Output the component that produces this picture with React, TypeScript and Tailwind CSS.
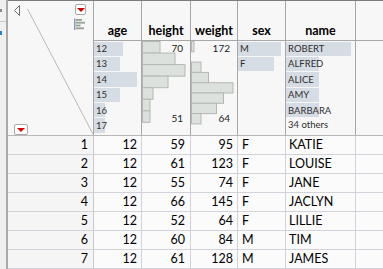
import React from "react";

const rows: [number, number, number, number, string, string][] = [
  [1, 12, 59, 95, "F", "KATIE"],
  [2, 12, 61, 123, "F", "LOUISE"],
  [3, 12, 55, 74, "F", "JANE"],
  [4, 12, 66, 145, "F", "JACLYN"],
  [5, 12, 52, 64, "F", "LILLIE"],
  [6, 12, 60, 84, "M", "TIM"],
  [7, 12, 61, 128, "M", "JAMES"],
];

const ageBars = [
  { label: "12", w: 29 },
  { label: "13", w: 26 },
  { label: "14", w: 43 },
  { label: "15", w: 26 },
  { label: "16", w: 11 },
  { label: "17", w: 11 },
];

const nameBars = [
  { label: "ROBERT", w: 65 },
  { label: "ALFRED", w: 33 },
  { label: "ALICE", w: 33 },
  { label: "AMY", w: 33 },
  { label: "BARBARA", w: 33 },
];

const heightBins = [17.5, 32.5, 42.5, 25.5, 10.5, 7.5, 7.5];
const weightBins = [2.5, 0, 9.5, 17, 41.5, 32, 25, 9.5];

function Histogram({ bins, binH }: { bins: number[]; binH: number }) {
  return (
    <svg width="48" height="94" className="absolute left-0 top-0">
      {bins.map((w, i) =>
        w > 0 ? (
          <rect
            key={i}
            x={0.5}
            y={0.5 + i * binH}
            width={w}
            height={binH}
            fill="#dde1dd"
            stroke="#b3b8b3"
            strokeWidth={1}
          />
        ) : null
      )}
    </svg>
  );
}

function RedButton({ className }: { className: string }) {
  return (
    <div
      className={`absolute bg-white border border-[#a9a9a9] rounded-[2px] flex items-center justify-center ${className}`}
    >
      <svg width="8" height="4" viewBox="0 0 8 4">
        <polygon points="0,0 8,0 4,4" fill="#d40000" />
      </svg>
    </div>
  );
}

function CornerCell() {
  return (
    <div className="relative w-[86px] shrink-0 border-r border-[#a8a8a8] bg-[#f7f7f7]">
      <svg width="85" height="134" className="absolute left-0 top-0">
        <line x1="19.5" y1="8" x2="85" y2="133" stroke="#b8b8b8" strokeWidth="1" />
        <polygon
          points="11.5,4.5 11.5,14.5 6.5,9.5"
          fill="none"
          stroke="#6f6f6f"
          strokeWidth="1"
        />
        <rect x="66" y="17.5" width="1.5" height="11.5" fill="#8797b8" />
        <rect x="68" y="18" width="6" height="1.8" fill="#93a293" />
        <rect x="68" y="20.8" width="9" height="1.8" fill="#93a293" />
        <rect x="68" y="23.6" width="4.5" height="1.8" fill="#93a293" />
        <rect x="68" y="26.4" width="8" height="1.8" fill="#93a293" />
      </svg>
      <RedButton className="left-[67px] top-[3px] w-[11px] h-[11px]" />
      <RedButton className="left-[6px] top-[123px] w-[14px] h-[11px]" />
    </div>
  );
}

function ColHead({
  name,
  w,
  children,
}: {
  name: string;
  w: string;
  children?: React.ReactNode;
}) {
  return (
    <div className={`${w} shrink-0 flex flex-col border-r border-[#a8a8a8]`}>
      <div className="h-[40px] border-b border-[#a8a8a8] flex items-end justify-center pb-[2px] text-[12.5px] font-bold text-black leading-[14px]">
        {name}
      </div>
      <div className="relative h-[94px]">{children}</div>
    </div>
  );
}

function BarList({ bars }: { bars: { label: string; w: number }[] }) {
  return (
    <div className="flex flex-col gap-[1px] pt-[0.5px]">
      {bars.map((b) => (
        <div
          key={b.label}
          className="h-[14.4px] bg-[#d6dce4] flex items-center pl-[2px] text-[9.5px] text-[#2e2e2e] leading-none"
          style={{ width: b.w }}
        >
          {b.label}
        </div>
      ))}
    </div>
  );
}

export default function App() {
  return (
    <div className="w-[383px] h-[269px] overflow-hidden flex bg-[#f7f7f7] font-['Lato',sans-serif] text-black">
      <div className="w-[6px] shrink-0 flex flex-col bg-[#f0f0f0]">
        <div className="h-[22px] border-b border-[#c8c8c8] relative">
          <div className="absolute left-0 top-[9px] w-[2px] h-[3px] bg-[#8a8a8a]" />
        </div>
        <div className="relative h-[14px]">
          <div className="absolute left-0 top-[9px] w-[2px] h-[4px] bg-[#3a78d0]" />
        </div>
      </div>
      <div className="w-[2px] shrink-0 bg-[#a9a9a9]" />
      <div className="flex-1 min-w-0 flex flex-col">
        <div className="h-[3px] bg-[#7b7b7b]" />
        <div className="flex h-[135px] border-b border-[#b8b8b8]">
          <CornerCell />
          <ColHead name="age" w="w-[48px]">
            <BarList bars={ageBars} />
          </ColHead>
          <ColHead name="height" w="w-[49px]">
            <Histogram bins={heightBins} binH={11.55} />
            <span className="absolute right-[7px] top-[2px] text-[10px] leading-none text-[#1a1a1a]">70</span>
            <span className="absolute right-[7px] top-[72px] text-[10px] leading-none text-[#1a1a1a]">51</span>
          </ColHead>
          <ColHead name="weight" w="w-[47px]">
            <Histogram bins={weightBins} binH={10.3} />
            <span className="absolute right-[7px] top-[2px] text-[10px] leading-none text-[#1a1a1a]">172</span>
            <span className="absolute right-[7px] top-[72px] text-[10px] leading-none text-[#1a1a1a]">64</span>
          </ColHead>
          <ColHead name="sex" w="w-[48px]">
            <BarList
              bars={[
                { label: "M", w: 43 },
                { label: "F", w: 36 },
              ]}
            />
          </ColHead>
          <ColHead name="name" w="w-[70px]">
            <BarList bars={nameBars} />
            <div className="pl-[2px] pt-[3px] text-[9.5px] leading-none text-[#2e2e2e]">34 others</div>
          </ColHead>
          <div className="flex-1 flex flex-col">
            <div className="h-[40px] border-b border-[#a8a8a8]" />
          </div>
        </div>
        {rows.map((r) => (
          <div key={r[0]} className="flex h-[19px] shrink-0 border-b border-[#d2d2da] text-[12.5px] leading-[18px]">
            <div className="w-[86px] shrink-0 border-r border-[#c8c8c8] text-right pr-[5px] bg-[#f5f5f5]">{r[0]}</div>
            <div className="w-[48px] shrink-0 border-r border-[#d2d2da] text-right pr-[4px] bg-[#fbfbfb]">{r[1]}</div>
            <div className="w-[49px] shrink-0 border-r border-[#d2d2da] text-right pr-[5px] bg-[#fbfbfb]">{r[2]}</div>
            <div className="w-[47px] shrink-0 border-r border-[#d2d2da] text-right pr-[4px] bg-[#fbfbfb]">{r[3]}</div>
            <div className="w-[48px] shrink-0 border-r border-[#d2d2da] pl-[4px] bg-[#fbfbfb]">{r[4]}</div>
            <div className="w-[70px] shrink-0 border-r border-[#d2d2da] pl-[3px] bg-[#fbfbfb]">{r[5]}</div>
            <div className="flex-1 bg-[#fbfbfb]" />
          </div>
        ))}
      </div>
    </div>
  );
}
